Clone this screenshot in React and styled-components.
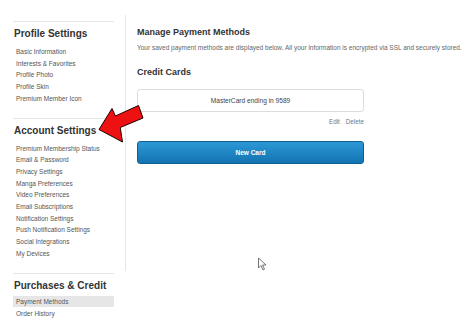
import styled, { createGlobalStyle } from 'styled-components'

const Global = createGlobalStyle`
  html, body {
    margin: 0;
    padding: 0;
    background: #fff;
    font-family: "Liberation Sans", Arial, sans-serif;
  }
`
const Page = styled.div`
  position: relative;
  width: 474px;
  height: 323px;
  overflow: hidden;
  display: flex;
  align-items: flex-start;
  padding: 15px 0 0 13px;
  box-sizing: border-box;
`
const Sidebar = styled.nav`
  width: 101px;
  margin-top: 6px;
  flex-shrink: 0;
`
const Section = styled.div`
  border-top: 1px solid #e6e6e6;
  padding: 5px 0 ${props => props.last ? 0 : 13}px;
`
const Heading = styled.h2`
  margin: 0 0 ${props => props.tight ? 3 : 5}px;
  padding-left: 1px;
  font-size: 10px;
  line-height: 14px;
  font-weight: bold;
  color: #333;
`
const NavLink = styled.div`
  font-size: 6.5px;
  line-height: ${props => props.active ? 11 : 11.7}px;
  padding-left: 3px;
  color: #555;
  white-space: nowrap;
  background: ${props => props.active ? '#e6e6e6' : 'transparent'};
  margin-bottom: ${props => props.active ? 1 : 0}px;
`
const Main = styled.main`
  margin-left: 11px;
  border-left: 1px solid #e6e6e6;
  height: 245px;
  padding: 11px 0 0 11px;
  flex: 1;
`
const Column = styled.div`
  width: 227px;
`
const Title = styled.h1`
  margin: 0;
  font-size: 9px;
  line-height: 12px;
  font-weight: bold;
  color: #333;
`
const Subtitle = styled.p`
  margin: 5px 0 0;
  font-size: 6.5px;
  line-height: 10px;
  color: #666;
  white-space: nowrap;
`
const SubTitle = styled(Title)`
  margin-top: 13px;
`
const Card = styled.div`
  margin-top: 11px;
  height: 23px;
  box-sizing: border-box;
  border: 1px solid #dcdcdc;
  border-radius: 3px;
  display: flex;
  align-items: center;
  justify-content: center;
  font-size: 6.6px;
  color: #444;
`
const Actions = styled.div`
  margin-top: 5px;
  display: flex;
  justify-content: flex-end;
  gap: 6px;
  font-size: 6.3px;
  line-height: 10px;
`
const Action = styled.span`
  color: ${props => props.blue ? '#5b7d99' : '#777'};
`
const NewButton = styled.button`
  margin-top: 14px;
  width: 100%;
  height: 23px;
  border: 1px solid #115f92;
  border-radius: 3px;
  background: linear-gradient(#2d98d6, #1273b2);
  color: #fff;
  font-family: inherit;
  font-weight: bold;
  font-size: 6.5px;
  display: flex;
  align-items: center;
  justify-content: center;
  padding: 0;
`
const Overlay = styled.svg`
  position: absolute;
  left: 0;
  top: 0;
  pointer-events: none;
`

const profile = ['Basic Information', 'Interests & Favorites', 'Profile Photo', 'Profile Skin', 'Premium Member Icon']
const account = ['Premium Membership Status', 'Email & Password', 'Privacy Settings', 'Manga Preferences', 'Video Preferences', 'Email Subscriptions', 'Notification Settings', 'Push Notification Settings', 'Social Integrations', 'My Devices']

const App = () => {
  return (
    <Page>
      <Global />
      <Sidebar>
        <Section>
          <Heading>Profile Settings</Heading>
          {profile.map(l => <NavLink key={l}>{l}</NavLink>)}
        </Section>
        <Section>
          <Heading>Account Settings</Heading>
          {account.map(l => <NavLink key={l}>{l}</NavLink>)}
        </Section>
        <Section last>
          <Heading tight>Purchases &amp; Credit</Heading>
          <NavLink active>Payment Methods</NavLink>
          <NavLink>Order History</NavLink>
        </Section>
      </Sidebar>
      <Main>
        <Title>Manage Payment Methods</Title>
        <Subtitle>Your saved payment methods are displayed below. All your information is encrypted via SSL and securely stored.</Subtitle>
        <Column>
          <SubTitle>Credit Cards</SubTitle>
          <Card>MasterCard ending in 9589</Card>
          <Actions>
            <Action>Edit</Action>
            <Action blue>Delete</Action>
          </Actions>
          <NewButton>New Card</NewButton>
        </Column>
      </Main>
      <Overlay width="474" height="323" viewBox="0 0 474 323">
        <polygon
          points="99,129.5 112,108.5 115.4,116 138.5,105.5 143,118 120.2,127.5 122.5,142"
          fill="#ee1111"
          stroke="#220000"
          strokeWidth="1"
          strokeLinejoin="miter"
        />
        <path
          d="M258.5 258 L258.5 268 L261 265.5 L263 270 L264.5 269.3 L262.6 265 L266 265 Z"
          fill="#fff"
          stroke="#555"
          strokeWidth="0.8"
        />
      </Overlay>
    </Page>
  )
}

export default App;
